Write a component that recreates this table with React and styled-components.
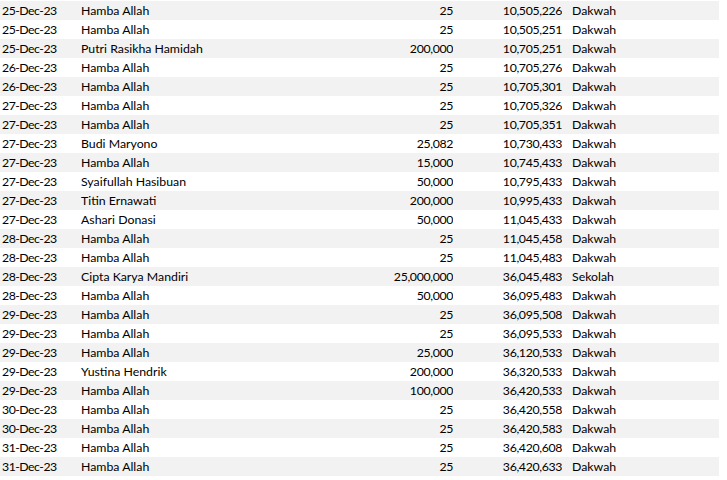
import React from "react";
import styled, { createGlobalStyle } from "styled-components";

const Global = createGlobalStyle`
  html, body { margin: 0; padding: 0; background: #ffffff; }
  body { font-family: Lato, "Liberation Sans", sans-serif; }
`;

const Sheet = styled.div`
  padding-top: 1px;
  width: 719px;
`;

const Row = styled.div`
  display: grid;
  grid-template-columns: 79px 260px 114px 109px 157px;
  height: 19px;
  line-height: 20px;
  background: ${(p) => (p.$shade ? "#f2f2f2" : "#ffffff")};
  font-size: 12.3px;
  color: #000000;
  white-space: nowrap;
`;

const Cell = styled.div`
  text-align: ${(p) => (p.$right ? "right" : "left")};
  padding-left: ${(p) => p.$pl || 0}px;
  letter-spacing: ${(p) => p.$ls || 0}px;
  overflow: hidden;
`;

const data = [
  ["25-Dec-23", "Hamba Allah", "25", "10,505,226", "Dakwah"],
  ["25-Dec-23", "Hamba Allah", "25", "10,505,251", "Dakwah"],
  ["25-Dec-23", "Putri Rasikha Hamidah", "200,000", "10,705,251", "Dakwah"],
  ["26-Dec-23", "Hamba Allah", "25", "10,705,276", "Dakwah"],
  ["26-Dec-23", "Hamba Allah", "25", "10,705,301", "Dakwah"],
  ["27-Dec-23", "Hamba Allah", "25", "10,705,326", "Dakwah"],
  ["27-Dec-23", "Hamba Allah", "25", "10,705,351", "Dakwah"],
  ["27-Dec-23", "Budi Maryono", "25,082", "10,730,433", "Dakwah"],
  ["27-Dec-23", "Hamba Allah", "15,000", "10,745,433", "Dakwah"],
  ["27-Dec-23", "Syaifullah Hasibuan", "50,000", "10,795,433", "Dakwah"],
  ["27-Dec-23", "Titin Ernawati", "200,000", "10,995,433", "Dakwah"],
  ["27-Dec-23", "Ashari Donasi", "50,000", "11,045,433", "Dakwah"],
  ["28-Dec-23", "Hamba Allah", "25", "11,045,458", "Dakwah"],
  ["28-Dec-23", "Hamba Allah", "25", "11,045,483", "Dakwah"],
  ["28-Dec-23", "Cipta Karya Mandiri", "25,000,000", "36,045,483", "Sekolah"],
  ["28-Dec-23", "Hamba Allah", "50,000", "36,095,483", "Dakwah"],
  ["29-Dec-23", "Hamba Allah", "25", "36,095,508", "Dakwah"],
  ["29-Dec-23", "Hamba Allah", "25", "36,095,533", "Dakwah"],
  ["29-Dec-23", "Hamba Allah", "25,000", "36,120,533", "Dakwah"],
  ["29-Dec-23", "Yustina Hendrik", "200,000", "36,320,533", "Dakwah"],
  ["29-Dec-23", "Hamba Allah", "100,000", "36,420,533", "Dakwah"],
  ["30-Dec-23", "Hamba Allah", "25", "36,420,558", "Dakwah"],
  ["30-Dec-23", "Hamba Allah", "25", "36,420,583", "Dakwah"],
  ["31-Dec-23", "Hamba Allah", "25", "36,420,608", "Dakwah"],
  ["31-Dec-23", "Hamba Allah", "25", "36,420,633", "Dakwah"],
];

export default function App() {
  return (
    <>
      <Global />
      <Sheet>
        {data.map((r, i) => (
          <Row key={i} $shade={i % 2 === 0}>
            <Cell $pl={2} $ls={-0.5}>{r[0]}</Cell>
            <Cell $pl={2}>{r[1]}</Cell>
            <Cell $right $ls={-0.35}>{r[2]}</Cell>
            <Cell $right $ls={-0.35}>{r[3]}</Cell>
            <Cell $pl={10}>{r[4]}</Cell>
          </Row>
        ))}
      </Sheet>
    </>
  );
}
